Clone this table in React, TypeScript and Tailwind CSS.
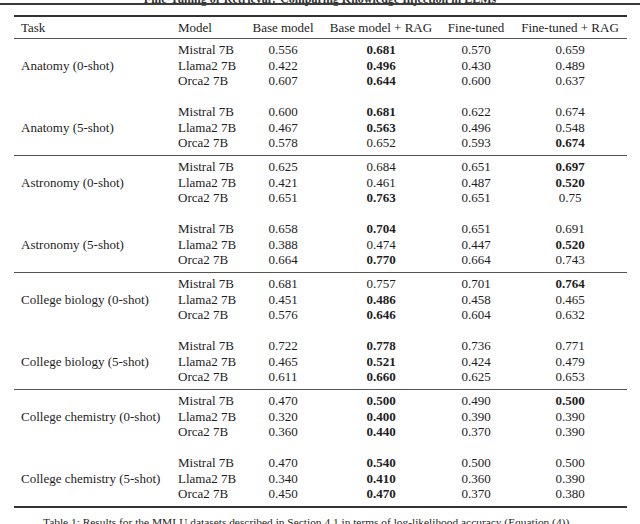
import React from "react";

type Row = { model: string; v: [string, boolean][] };
type Block = { task: string; rows: Row[] };
type Group = Block[];

const r = (model: string, ...vals: string[]): Row => ({
  model,
  v: vals.map((s) => (s.startsWith("*") ? [s.slice(1), true] : [s, false])) as [string, boolean][],
});

const groups: Group[] = [
  [
    {
      task: "Anatomy (0-shot)",
      rows: [
        r("Mistral 7B", "0.556", "*0.681", "0.570", "0.659"),
        r("Llama2 7B", "0.422", "*0.496", "0.430", "0.489"),
        r("Orca2 7B", "0.607", "*0.644", "0.600", "0.637"),
      ],
    },
    {
      task: "Anatomy (5-shot)",
      rows: [
        r("Mistral 7B", "0.600", "*0.681", "0.622", "0.674"),
        r("Llama2 7B", "0.467", "*0.563", "0.496", "0.548"),
        r("Orca2 7B", "0.578", "0.652", "0.593", "*0.674"),
      ],
    },
  ],
  [
    {
      task: "Astronomy (0-shot)",
      rows: [
        r("Mistral 7B", "0.625", "0.684", "0.651", "*0.697"),
        r("Llama2 7B", "0.421", "0.461", "0.487", "*0.520"),
        r("Orca2 7B", "0.651", "*0.763", "0.651", "0.75"),
      ],
    },
    {
      task: "Astronomy (5-shot)",
      rows: [
        r("Mistral 7B", "0.658", "*0.704", "0.651", "0.691"),
        r("Llama2 7B", "0.388", "0.474", "0.447", "*0.520"),
        r("Orca2 7B", "0.664", "*0.770", "0.664", "0.743"),
      ],
    },
  ],
  [
    {
      task: "College biology (0-shot)",
      rows: [
        r("Mistral 7B", "0.681", "0.757", "0.701", "*0.764"),
        r("Llama2 7B", "0.451", "*0.486", "0.458", "0.465"),
        r("Orca2 7B", "0.576", "*0.646", "0.604", "0.632"),
      ],
    },
    {
      task: "College biology (5-shot)",
      rows: [
        r("Mistral 7B", "0.722", "*0.778", "0.736", "0.771"),
        r("Llama2 7B", "0.465", "*0.521", "0.424", "0.479"),
        r("Orca2 7B", "0.611", "*0.660", "0.625", "0.653"),
      ],
    },
  ],
  [
    {
      task: "College chemistry (0-shot)",
      rows: [
        r("Mistral 7B", "0.470", "*0.500", "0.490", "*0.500"),
        r("Llama2 7B", "0.320", "*0.400", "0.390", "0.390"),
        r("Orca2 7B", "0.360", "*0.440", "0.370", "0.390"),
      ],
    },
    {
      task: "College chemistry (5-shot)",
      rows: [
        r("Mistral 7B", "0.470", "*0.540", "0.500", "0.500"),
        r("Llama2 7B", "0.340", "*0.410", "0.360", "0.390"),
        r("Orca2 7B", "0.450", "*0.470", "0.370", "0.380"),
      ],
    },
  ],
];

const COLS = "grid grid-cols-[156px_73px_80px_116px_74px_114px]";

function BlockRows({ block }: { block: Block }) {
  return (
    <div className={`${COLS} grid-rows-[15.5px_15.5px_15.5px] leading-[15.5px]`}>
      <div className="row-span-3 flex items-center pl-[7px] whitespace-nowrap">{block.task}</div>
      {block.rows.map((row) => (
        <React.Fragment key={row.model}>
          <div className="pl-[8px] whitespace-nowrap">{row.model}</div>
          {row.v.map(([val, bold], i) => (
            <div key={i} className={`text-center ${bold ? "font-bold" : ""}`}>
              {val}
            </div>
          ))}
        </React.Fragment>
      ))}
    </div>
  );
}

export default function App() {
  return (
    <div className="w-[640px] h-[524px] bg-white overflow-hidden font-['Liberation_Serif',serif] text-[13px] text-[#1d1d1d]">
      <div className="relative h-[15px] overflow-hidden">
        <div className="-mt-[7px] text-center text-[12px] leading-[12px] font-bold text-[#333]">
          Fine-Tuning or Retrieval? Comparing Knowledge Injection in LLMs
        </div>
        <div className="absolute left-0 right-0 top-[3px] h-[2px] bg-[#3a3a3a]" />
      </div>
      <div className="ml-[14px] w-[613px]">
        <div className="h-[2px] bg-[#333]" />
        <div className={`${COLS} h-[21px] items-center leading-[15px]`}>
          <div className="pl-[7px]">Task</div>
          <div className="pl-[8px]">Model</div>
          <div className="text-center whitespace-nowrap">Base model</div>
          <div className="text-center whitespace-nowrap">Base model + RAG</div>
          <div className="text-center whitespace-nowrap">Fine-tuned</div>
          <div className="text-center whitespace-nowrap">Fine-tuned + RAG</div>
        </div>
        {groups.map((g, gi) => (
          <div key={gi} className="border-t border-[#555] pt-[3px] pb-[4.5px]">
            <BlockRows block={g[0]} />
            <div className="h-[15.5px]" />
            <BlockRows block={g[1]} />
          </div>
        ))}
        <div className="h-[2px] bg-[#333]" />
      </div>
      <div className="mt-[8px] pl-[43px] text-[11.4px] leading-[13px] whitespace-nowrap">
        Table 1: Results for the MMLU datasets described in Section 4.1 in terms of log-likelihood accuracy (Equation (4)).
      </div>
    </div>
  );
}
